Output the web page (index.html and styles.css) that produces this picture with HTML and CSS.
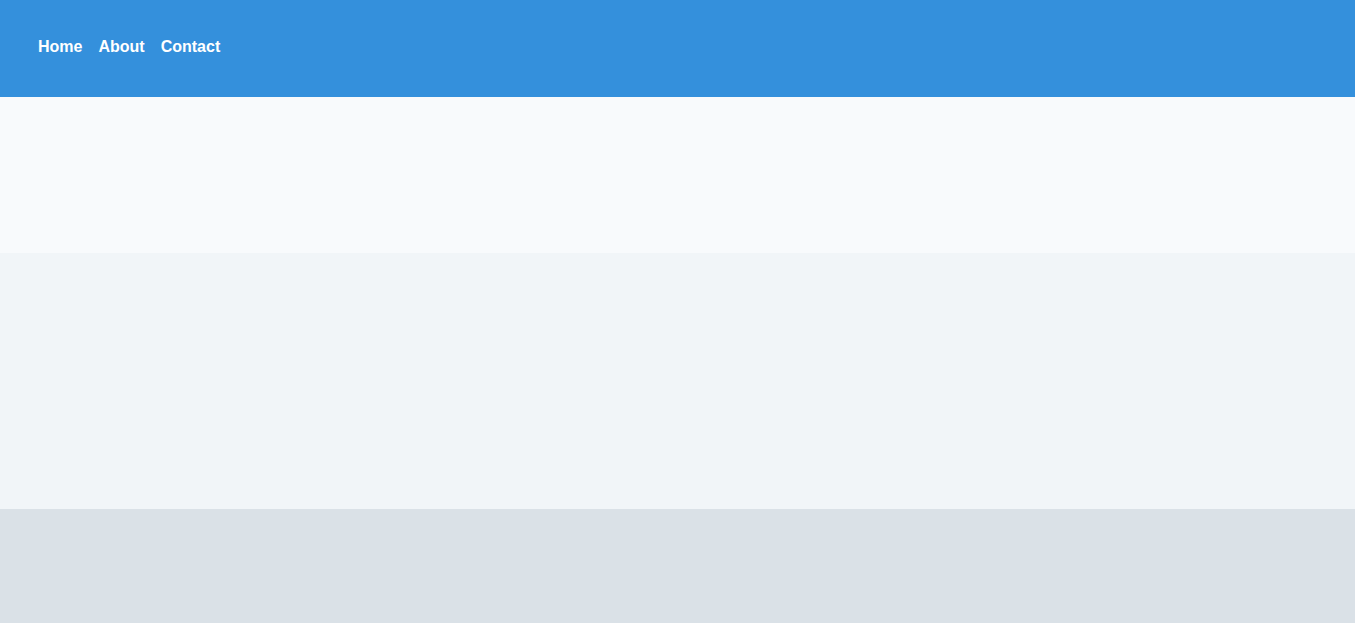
FILE: index.html
```html
<!DOCTYPE html>
<html lang="en">

<head>
    <meta charset="UTF-8">
    <meta name="viewport" content="width=device-width, initial-scale=1.0">
    <title>Home</title>
    <link rel="stylesheet" href="styles.css">
</head>

<body>

    <header class="header">
        <nav class="nav-links">
            <ul>
                <li><a href="#">Home</a></li>
                <li><a href="#">About</a></li>
                <li><a href="#">Contact</a></li>
            </ul>
        </nav>
    </header>

    <section class="band band-light"></section>
    <section class="band band-mid"></section>
    <section class="band band-dark"></section>

</body>

</html>
```

FILE: styles.css
```css
body {
    margin: 0;
    font-family: 'Liberation Sans', Arial, sans-serif;
    background-color: #dae1e7;
}

.header {
    box-sizing: border-box;
    height: 97px;
    padding: 38px 38px 0;
    background-color: #3490dc;
}

.nav-links ul {
    list-style: none;
    margin: 0;
    padding: 0;
    display: flex;
    gap: 16px;
}

.nav-links ul li a {
    color: white;
    font-size: 16px;
    font-weight: 700;
    text-decoration: none;
}

.band-light {
    height: 156px;
    background-color: #f8fafc;
}

.band-mid {
    height: 256px;
    background-color: #f1f5f8;
}

.band-dark {
    height: 1272px; /* page runs on below the fold */
    background-color: #dae1e7;
}
```
